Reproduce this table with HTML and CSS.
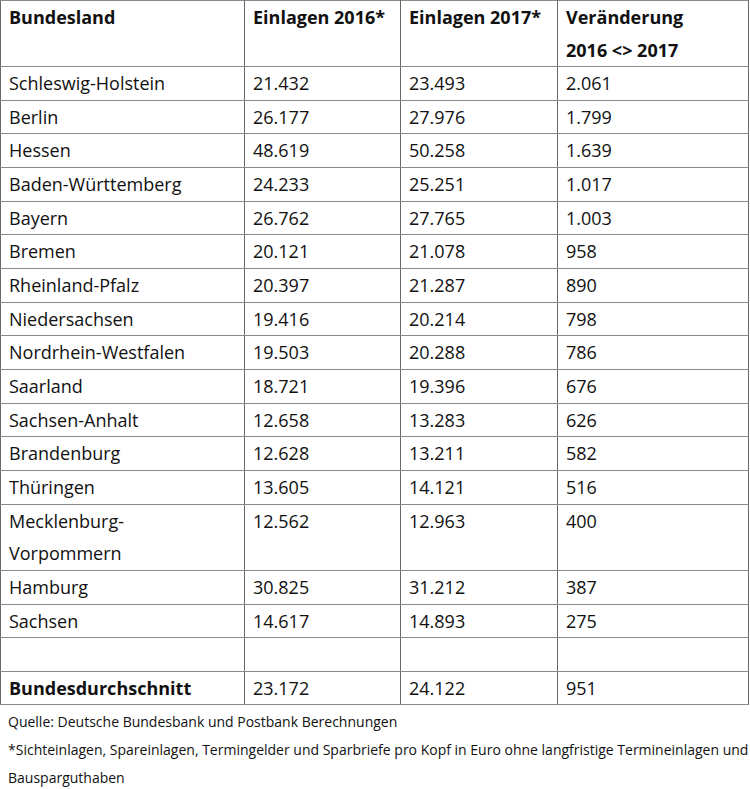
FILE: index.html
```html
<!DOCTYPE html>
<html lang="de">
<head>
<meta charset="utf-8">
<title>Einlagen pro Kopf</title>
<link rel="stylesheet" href="styles.css">
</head>
<body>
<table class="data">
  <colgroup>
    <col class="c1"><col class="c2"><col class="c3"><col class="c4">
  </colgroup>
  <thead>
    <tr><th>Bundesland</th><th>Einlagen 2016*</th><th>Einlagen 2017*</th><th>Veränderung<br>2016 &lt;&gt; 2017</th></tr>
  </thead>
  <tbody>
    <tr><td>Schleswig-Holstein</td><td>21.432</td><td>23.493</td><td>2.061</td></tr>
    <tr><td>Berlin</td><td>26.177</td><td>27.976</td><td>1.799</td></tr>
    <tr><td>Hessen</td><td>48.619</td><td>50.258</td><td>1.639</td></tr>
    <tr><td>Baden-Württemberg</td><td>24.233</td><td>25.251</td><td>1.017</td></tr>
    <tr><td>Bayern</td><td>26.762</td><td>27.765</td><td>1.003</td></tr>
    <tr><td>Bremen</td><td>20.121</td><td>21.078</td><td>958</td></tr>
    <tr><td>Rheinland-Pfalz</td><td>20.397</td><td>21.287</td><td>890</td></tr>
    <tr><td>Niedersachsen</td><td>19.416</td><td>20.214</td><td>798</td></tr>
    <tr><td>Nordrhein-Westfalen</td><td>19.503</td><td>20.288</td><td>786</td></tr>
    <tr><td>Saarland</td><td>18.721</td><td>19.396</td><td>676</td></tr>
    <tr><td>Sachsen-Anhalt</td><td>12.658</td><td>13.283</td><td>626</td></tr>
    <tr><td>Brandenburg</td><td>12.628</td><td>13.211</td><td>582</td></tr>
    <tr><td>Thüringen</td><td>13.605</td><td>14.121</td><td>516</td></tr>
    <tr><td>Mecklenburg-<br>Vorpommern</td><td>12.562</td><td>12.963</td><td>400</td></tr>
    <tr><td>Hamburg</td><td>30.825</td><td>31.212</td><td>387</td></tr>
    <tr><td>Sachsen</td><td>14.617</td><td>14.893</td><td>275</td></tr>
    <tr><td>&nbsp;</td><td></td><td></td><td></td></tr>
    <tr class="total"><td>Bundesdurchschnitt</td><td>23.172</td><td>24.122</td><td>951</td></tr>
  </tbody>
</table>
<div class="notes">
  <p>Quelle: Deutsche Bundesbank und Postbank Berechnungen</p>
  <p>*Sichteinlagen, Spareinlagen, Termingelder und Sparbriefe pro Kopf in Euro ohne langfristige Termineinlagen und Bausparguthaben</p>
</div>
</body>
</html>
```
FILE: styles.css
```css
html, body {
  margin: 0;
  padding: 0;
  background: #fff;
}
body {
  font-family: "Open Sans", "Noto Sans", sans-serif;
  color: #111;
}
.data {
  border-collapse: collapse;
  width: 748px;
  table-layout: fixed;
  font-size: 18px;
  line-height: 32.65px;
}
.c1 { width: 244px; }
.c2 { width: 156px; }
.c3 { width: 157px; }
.c4 { width: 191px; }
.data th, .data td {
  text-align: left;
  vertical-align: top;
  padding: 0 0 0 8px;
  border-left: 1px solid #6a6a6a;
  border-right: 1px solid #6a6a6a;
  border-top: 1px solid #8a8a8a;
  border-bottom: 1px solid #8a8a8a;
  white-space: nowrap;
}
.data th {
  font-weight: 700;
  line-height: 32.5px;
}
.total td:first-child {
  font-weight: 700;
}
.notes {
  padding: 3px 0 0 8px;
  font-size: 14px;
  line-height: 28px;
  color: #111;
}
.notes p {
  margin: 0;
}
```
